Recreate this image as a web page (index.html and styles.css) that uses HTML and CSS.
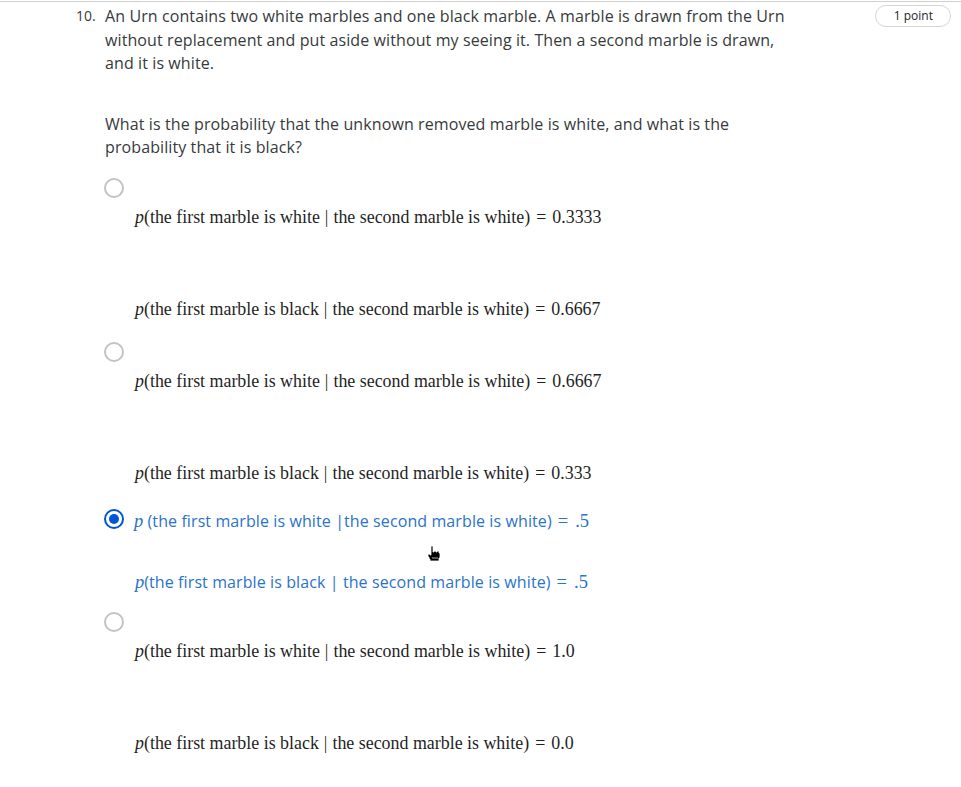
FILE: index.html
```html
<!DOCTYPE html>
<html>
<head>
<meta charset="utf-8">
<link rel="stylesheet" href="styles.css">
</head>
<body>
<div class="rule"></div>
<div class="question">
  <div class="qnum">10.</div>
  <div class="qbody">
    <p class="prompt">An Urn contains two white marbles and one black marble. A marble is drawn from the Urn without replacement and put aside without my seeing it. Then a second marble is drawn, and it is white.</p>
    <p class="prompt second">What is the probability that the unknown removed marble is white, and what is the probability that it is black?</p>

    <div class="option">
      <span class="radio"></span>
      <div class="math first"><i>p</i>(the first marble is white<span class="mid">|</span>the second marble is white)<span class="eq">=</span>0.3333</div>
      <div class="math"><i>p</i>(the first marble is black<span class="mid">|</span>the second marble is white)<span class="eq">=</span>0.6667</div>
    </div>

    <div class="option">
      <span class="radio"></span>
      <div class="math first"><i>p</i>(the first marble is white<span class="mid">|</span>the second marble is white)<span class="eq">=</span>0.6667</div>
      <div class="math"><i>p</i>(the first marble is black<span class="mid">|</span>the second marble is white)<span class="eq">=</span>0.333</div>
    </div>

    <div class="option selected">
      <div class="sel-row">
        <span class="radio on"></span>
        <span class="blue"><i class="mp">p</i> (the first marble is white |the second marble is white)<span class="meq"><span class="eq">=</span>.5</span></span>
      </div>
      <div class="cursor-row">
        <svg class="cursor" width="14" height="17" viewBox="0 0 14 17"><path d="M4 1 h2 v6 h1 v-1 h2 v1 h1 v-1 h2 v2 h1 v5 h-1 v3 h-9 v-2 h-1 v-2 h-1 v-3 h2 v1 h1 z" fill="#000" stroke="#fff" stroke-width="0.8"/><path d="M6 12 v2 M8 12 v2 M10 12 v2" stroke="#fff" stroke-width="0.7"/></svg>
      </div>
      <div class="blue line2"><i class="mp">p</i>(the first marble is black | the second marble is white)<span class="meq"><span class="eq">=</span>.5</span></div>
    </div>

    <div class="option">
      <span class="radio"></span>
      <div class="math first"><i>p</i>(the first marble is white<span class="mid">|</span>the second marble is white)<span class="eq">=</span>1.0</div>
      <div class="math"><i>p</i>(the first marble is black<span class="mid">|</span>the second marble is white)<span class="eq">=</span>0.0</div>
    </div>
  </div>
  <div class="points"><span class="pill">1 point</span></div>
</div>
</body>
</html>
```
FILE: styles.css
```css
html, body {
  margin: 0;
  padding: 0;
  background: #fff;
}
body {
  font-family: "Open Sans", "Noto Sans", sans-serif;
  color: #373a3c;
  width: 961px;
}
.rule {
  margin-top: 1px;
  border-top: 1px solid #d0d0d0;
}
.question {
  display: grid;
  grid-template-columns: 76px 29px 690px 1fr;
  align-items: start;
}
.qnum {
  grid-column: 2;
  font-size: 14px;
  line-height: 24px;
  padding-top: 2px;
}
.qbody {
  grid-column: 3;
  padding-top: 3px;
}
.points {
  grid-column: 4;
  display: flex;
  justify-content: flex-end;
  padding-right: 10px;
  padding-top: 3px;
}
.pill {
  display: inline-block;
  font-size: 12px;
  line-height: 20px;
  padding: 0 17px 0 18px;
  border: 1px solid #d6d6d6;
  border-radius: 12px;
  color: #1f1f1f;
}
.prompt {
  margin: 0;
  font-size: 16px;
  line-height: 23.5px;
  letter-spacing: 0.1px;
}
.prompt.second {
  margin-top: 37px;
}
.radio {
  display: block;
  width: 16px;
  height: 16px;
  border: 2px solid #c3c3c3;
  border-radius: 50%;
  box-sizing: content-box;
  background: #fff;
  flex: none;
}
.radio.on {
  border-color: #0056d2;
  position: relative;
}
.radio.on::after {
  content: "";
  position: absolute;
  left: 3px;
  top: 3px;
  width: 10px;
  height: 10px;
  border-radius: 50%;
  background: #0056d2;
}
.option {
  margin-top: 18px;
}
.option .radio {
  margin-left: -1px;
}
.math {
  font-family: "Liberation Serif", "Times New Roman", serif;
  font-size: 17.9px;
  line-height: 24px;
  color: #1f1f1f;
  margin-left: 30px;
  margin-top: 68px;
  white-space: nowrap;
}
.math.first {
  margin-top: 7px;
}
.mid {
  margin: 0 5px;
}
.eq {
  margin: 0 6px;
}
.option + .option {
  margin-top: 21px;
}
.option.selected {
  margin-top: 21px;
}
.option.selected + .option {
  margin-top: 18px;
}
.sel-row {
  display: flex;
  align-items: center;
  gap: 10px;
}
.blue {
  color: #2a73cc;
  font-size: 16px;
  line-height: 24px;
  white-space: nowrap;
  letter-spacing: 0.1px;
}
.sel-row .blue {
  margin-top: 3px;
}
.mp {
  font-family: "Liberation Serif", "Times New Roman", serif;
  font-size: 18.5px;
  letter-spacing: 0;
}
.meq {
  font-family: "Liberation Serif", "Times New Roman", serif;
  font-size: 18.5px;
  letter-spacing: 0;
}
.meq .eq {
  margin: 0 7px 0 6px;
}
.cursor-row {
  height: 37px;
  position: relative;
}
.cursor {
  position: absolute;
  left: 322px;
  top: 12px;
}
.line2 {
  margin-left: 30px;
}
```
